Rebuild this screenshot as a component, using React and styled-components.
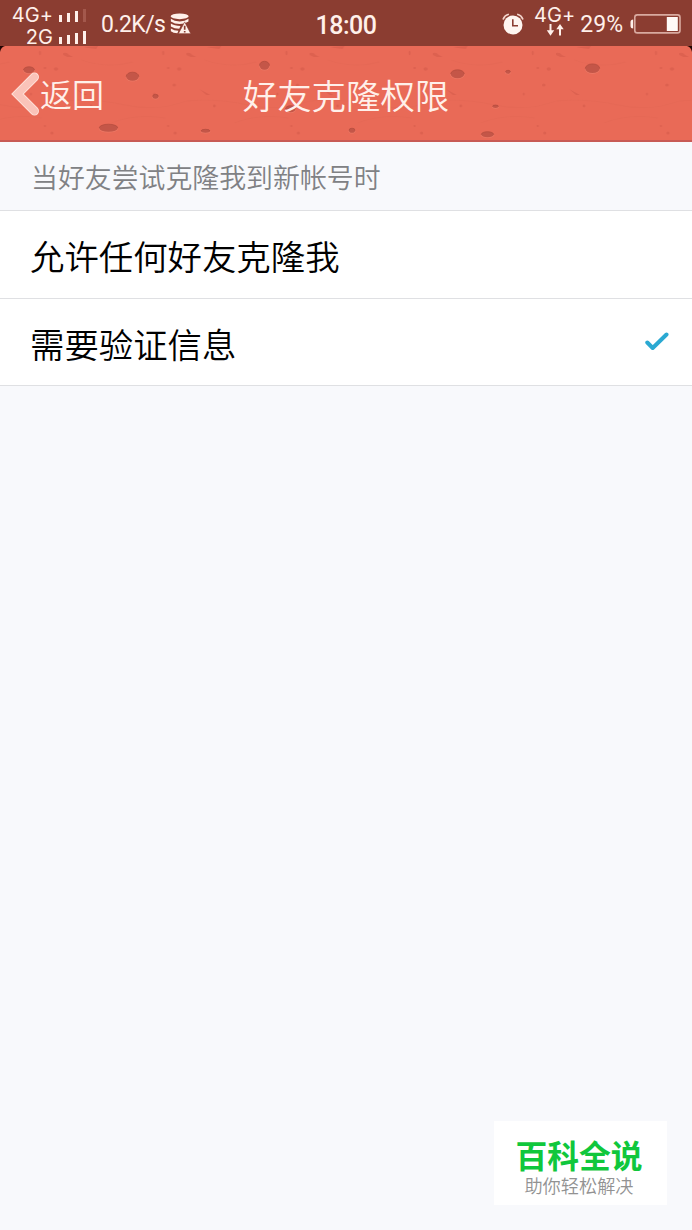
import React from 'react'
import styled, { createGlobalStyle } from 'styled-components';

const GlobalStyle = createGlobalStyle`
* {
  box-sizing: border-box;
}
body {
  margin: 0;
  background: #f8f9fc;
  font-family: Roboto, 'Noto Sans CJK SC', sans-serif;
}
`;

// height of every bar, in px
const strongBars = [7, 9, 11, 13];

const spots = [
  { x: 29, y: 24, rx: 5.5, ry: 3.2 },
  { x: 132.5, y: 30.5, rx: 6.3, ry: 4.3 },
  { x: 155.5, y: 50.5, rx: 2.8, ry: 2.2 },
  { x: 108.5, y: 82, rx: 9.3, ry: 3.8 },
  { x: 205.5, y: 85, rx: 4.5, ry: 1.7 },
  { x: 264.5, y: 19.5, rx: 5, ry: 4.2 },
  { x: 290.5, y: 63, rx: 5, ry: 3.3 },
  { x: 352, y: 84.5, rx: 3, ry: 2.3 },
  { x: 457.5, y: 28, rx: 6.8, ry: 4.2 },
  { x: 508, y: 26, rx: 2.5, ry: 1.7 },
  { x: 495.5, y: 60.5, rx: 3, ry: 1.4 },
  { x: 487.5, y: 88.5, rx: 6.2, ry: 2.8 },
  { x: 592.5, y: 22.5, rx: 7.2, ry: 4.6 },
];

const options = [
  { id: 'anyone', text: '允许任何好友克隆我', checked: false },
  { id: 'verify', text: '需要验证信息', checked: true },
];

const Signal = ({ name, weak }) => {
  return (
    <SignalRow>
      <span>{name}</span>
      <Bars>
        {strongBars.map((height, index) => (
          <Bar key={height} $height={height} $dim={weak && index === 3} />
        ))}
      </Bars>
    </SignalRow>
  )
};

const DataIcon = () => (
  <svg width="21" height="22" viewBox="0 0 20 21">
    <ellipse cx="9.2" cy="3.2" rx="8.6" ry="2.7" fill="#fff0ea" />
    <path d="M.8 5.5Q4 8 9.2 8T17.6 5.5V8Q14 10.5 9.2 10.5T.8 8Z" fill="#fff0ea" />
    <path d="M.8 10Q4 12.3 10 12.3L8.8 15Q4 15 .8 12.8Z" fill="#fff0ea" />
    <path d="M.8 14.8Q4 17 8 17L7 19.4Q3 19.4.8 17.5Z" fill="#fff0ea" />
    <path d="M14 8.5L19.8 19.7H8Z" fill="#fff0ea" stroke="#8b3d31" strokeWidth=".6" />
    <path d="M14 12.2V16M14 17.2V18.6" stroke="#8b3d31" strokeWidth="1.6" />
  </svg>
);

const AlarmIcon = () => (
  <svg width="22" height="22" viewBox="0 0 22 22">
    <circle cx="11" cy="12" r="9.5" fill="#fff5f0" />
    <path d="M1.4 5.8Q2.6 2.5 6.1 1.5M15.9 1.5Q19.4 2.5 20.6 5.8" fill="none" stroke="#f3d5cc" strokeWidth="1.8" strokeLinecap="round" />
    <path d="M10.8 6.2V12.7H16" fill="none" stroke="#8b3d31" strokeWidth="1.6" />
  </svg>
);

const ArrowsIcon = () => (
  <svg width="18" height="12" viewBox="0 0 18 12">
    <path d="M4.5 0V8M14 11.5V4" stroke="#fff0ea" strokeWidth="2" />
    <path d="M.8 6.3H8.2L4.5 11.7ZM10.3 5.2H17.7L14 0Z" fill="#fff0ea" />
  </svg>
);

const BatteryIcon = () => (
  <svg width="51" height="20" viewBox="0 0 51 20">
    <path d="M3.2 5.5Q.5 5.5.5 8V12Q.5 14.5 3.2 14.5Z" fill="#fff0ea" />
    <rect x="4.8" y=".9" width="45.2" height="18" rx="2.5" fill="none" stroke="#d9aaa0" strokeWidth="1.6" />
    <rect x="36.8" y="3" width="11" height="14" fill="#fffaf7" />
  </svg>
);

const Texture = () => (
  <TextureSvg width="692" height="96" viewBox="0 0 692 96">
    <defs>
      <pattern id="grain" x="-60" width="123.2" height="96" patternUnits="userSpaceOnUse">
        <g fill="#b84539" opacity=".26">
          <ellipse cx="116" cy="23" rx="2.2" ry="1.8" />
          <ellipse cx="105" cy="22" rx="1.5" ry="1" />
          <ellipse cx="111" cy="39" rx="1.8" ry="1.5" />
          <ellipse cx="112" cy="87" rx="1.6" ry="1.6" />
          <ellipse cx="28" cy="60" rx="1.4" ry="1.4" />
          <ellipse cx="91" cy="48" rx="1" ry="1.6" />
          <ellipse cx="105" cy="80" rx="1.2" ry="1" />
          <path d="M-2 8Q3 5 6 9L10 11 4 11ZM20 1L35 0 33 3 25 2ZM13 43L24 49 20 49Z" />
          <ellipse cx="100" cy="7" rx="1" ry="2.2" />
        </g>
        <path d="M0 55Q30 52 62 59T123 55M18 14Q44 23 70 16M48 77Q73 67 102 72" fill="none" stroke="#cf5749" strokeWidth="1.3" opacity=".1" />
      </pattern>
    </defs>
    <rect width="692" height="96" fill="url(#grain)" />
    {spots.map((spot) => (
      <g key={spot.x}>
        <ellipse cx={spot.x} cy={spot.y + 0.8} rx={spot.rx + 0.4} ry={spot.ry} fill="#f08a75" opacity=".45" />
        <ellipse cx={spot.x} cy={spot.y} rx={spot.rx} ry={spot.ry} fill="#c45648" />
        <path
          d={`M${spot.x - spot.rx} ${spot.y}A${spot.rx} ${spot.ry} 0 0 1 ${spot.x + spot.rx} ${spot.y}`}
          fill="none"
          stroke="#b14a3c"
          strokeWidth=".7"
        />
      </g>
    ))}
    <path d="M0 0H5Q1 1 0 6ZM692 0H687Q691 1 692 6Z" fill="#210503" />
  </TextureSvg>
);

const Option = ({ text, checked }) => {
  return (
    <OptionRow>
      <OptionText>{text}</OptionText>
      {checked && (
        <svg width="24" height="20" viewBox="0 0 24 20">
          <path d="M2.3 10.5L7.7 16 21.5 2.5" fill="none" stroke="#2ba9d2" strokeWidth="4" strokeLinecap="round" strokeLinejoin="round" />
        </svg>
      )}
    </OptionRow>
  )
};

const App = () => {
  return (
    <Page>
      <GlobalStyle />
      <StatusBar>
        <StatusGroup>
          <Signals>
            <Signal name="4G+" weak />
            <Signal name="2G" />
          </Signals>
          <Speed>0.2K/s</Speed>
          <DataIcon />
        </StatusGroup>
        <Clock>18:00</Clock>
        <StatusGroup $end>
          <AlarmIcon />
          <Network>
            <span>4G+</span>
            <ArrowsIcon />
          </Network>
          <Percent>29%</Percent>
          <BatteryIcon />
        </StatusGroup>
      </StatusBar>
      <Header>
        <Texture />
        <Back>
          <svg width="29" height="44" viewBox="0 0 29 44">
            <path d="M23.5 5L6.5 22 23.5 39" fill="none" stroke="#ffe0d8" strokeWidth="9" strokeLinecap="round" />
            <path d="M23.5 5L6.5 22 23.5 39" fill="none" stroke="#fac3b9" strokeWidth="7" strokeLinecap="round" />
          </svg>
          <BackText>返回</BackText>
        </Back>
        <Title>好友克隆权限</Title>
      </Header>
      <GroupLabel>当好友尝试克隆我到新帐号时</GroupLabel>
      {options.map((option) => (
        <Option key={option.id} text={option.text} checked={option.checked} />
      ))}
      <Badge>
        <BadgeName>百科全说</BadgeName>
        <BadgeSlogan>助你轻松解决</BadgeSlogan>
      </Badge>
    </Page>
  )
};

const Page = styled.main`
position: relative;
width: 692px;
height: 1230px;
overflow: hidden;
background: #f8f9fc;
white-space: nowrap;
`;

const StatusBar = styled.div`
display: grid;
grid-template-columns: 1fr auto 1fr;
align-items: center;
height: 46px;
padding: 0 11px;
background: #8b3d31;
color: #fff0ea;
`;

const StatusGroup = styled.div`
display: flex;
align-items: center;
justify-content: ${(props) => (props.$end ? 'flex-end' : 'flex-start')};
`;

const Signals = styled.div`
display: flex;
flex-direction: column;
align-items: flex-end;
width: 75px;
padding-top: 4px;
`;

const SignalRow = styled.div`
display: flex;
align-items: center;
gap: 6px;
height: 22px;
font-family: Inter, sans-serif;
font-size: 20px;
line-height: 22px;
letter-spacing: 0.1px;
`;

const Bars = styled.div`
display: flex;
align-items: flex-end;
gap: 5px;
height: 13px;
`;

const Bar = styled.i`
width: 3px;
height: ${(props) => props.$height}px;
background: ${(props) => (props.$dim ? '#a3584c' : '#fff0ea')};
`;

const Speed = styled.span`
margin: 1px 5px 0 15px;
font-size: 23px;
letter-spacing: -0.55px;
`;

const Clock = styled.span`
padding-top: 3px;
font-size: 25px;
font-weight: 500;
letter-spacing: -0.5px;
`;

const Network = styled.div`
display: flex;
flex-direction: column;
align-items: center;
margin: 0 5px 5px 10px;
font-family: Inter, sans-serif;
font-size: 20px;
line-height: 17px;
letter-spacing: 0.1px;
`;

const Percent = styled.span`
margin: 1px 7px 0 0;
font-size: 23px;
`;

const Header = styled.header`
position: relative;
display: grid;
grid-template-columns: 1fr auto 1fr;
align-items: center;
height: 96px;
padding: 0 11px;
border-bottom: 2px solid #c85b55;
background: #e96a57;
color: #fff0ea;
`;

const TextureSvg = styled.svg`
position: absolute;
top: 0;
left: 0;
`;

const Back = styled.div`
position: relative;
display: flex;
align-items: center;
padding-top: 2px;
font-size: 32px;
font-weight: 350;
line-height: 48px;
`;

const BackText = styled.span`
padding-top: 3px;
`;

const Title = styled.h1`
position: relative;
margin: 0;
padding-top: 8px;
font-size: 34.4px;
font-weight: 350;
line-height: 50px;
`;

const GroupLabel = styled.div`
height: 69px;
padding: 2px 31px 0;
border-bottom: 1px solid #dfe0e3;
color: #808184;
font-size: 26.9px;
font-weight: 350;
line-height: 70px;
`;

const OptionRow = styled.div`
display: flex;
align-items: center;
justify-content: space-between;
height: 88px;
padding: 0 23px 0 30px;
border-bottom: 1px solid #dfe0e3;
background: #fff;
color: #000;
font-size: 34.4px;
line-height: 80px;
&:last-of-type {
  height: 87px;
}
`;

const OptionText = styled.span`
padding-top: 7px;
font-weight: 350;
`;

const Badge = styled.aside`
position: absolute;
right: 25px;
bottom: 25px;
display: flex;
flex-direction: column;
align-items: center;
width: 173px;
height: 84px;
padding: 17px 3px 0 0;
background: #fff;
`;

const BadgeName = styled.strong`
color: #10c73c;
font-size: 31.8px;
font-weight: 700;
line-height: 38px;
`;

const BadgeSlogan = styled.span`
color: #929292;
font-size: 18.2px;
font-weight: 350;
line-height: 22px;
`;

export default App
